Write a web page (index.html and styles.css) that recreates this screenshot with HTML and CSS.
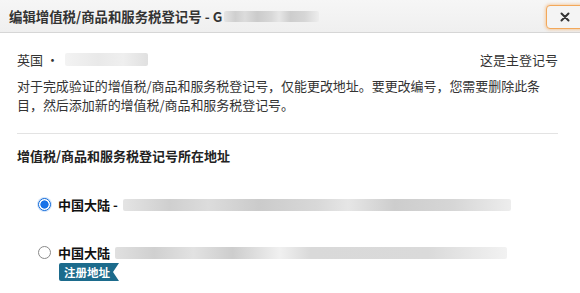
FILE: index.html
```html
<!DOCTYPE html>
<html lang="zh">
<head>
<meta charset="utf-8">
<link rel="stylesheet" href="styles.css">
</head>
<body>
<div class="modal">
  <div class="header">
    <div class="title">编辑增值税/商品和服务税登记号 - G<span class="blur blur-title"></span></div>
    <button class="close" aria-label="关闭">
      <svg width="10" height="10" viewBox="0 0 10 10"><path d="M1.5 1.5 L8.5 8.5 M8.5 1.5 L1.5 8.5" stroke="#333" stroke-width="2" stroke-linecap="round"/></svg>
    </button>
  </div>
  <div class="content">
    <div class="row-top">
      <div class="country">英国 · <span class="blur blur-num"></span></div>
      <div class="primary">这是主登记号</div>
    </div>
    <p class="note">对于完成验证的增值税/商品和服务税登记号，仅能更改地址。要更改编号，您需要删除此条目，然后添加新的增值税/商品和服务税登记号。</p>
    <div class="divider"></div>
    <div class="section-title">增值税/商品和服务税登记号所在地址</div>
    <div class="options">
      <label class="option">
        <span class="radio checked"></span>
        <span class="addr">中国大陆 -</span>
        <span class="blur blur-addr1"></span>
      </label>
      <div class="option-wrap">
        <label class="option">
          <span class="radio"></span>
          <span class="addr">中国大陆</span>
          <span class="blur blur-addr2"></span>
        </label>
        <div class="badge">注册地址</div>
      </div>
    </div>
  </div>
</div>
</body>
</html>
```

FILE: styles.css
```css
* { box-sizing: border-box; }
html, body {
  margin: 0;
  padding: 0;
  background: #fff;
  overflow: hidden;
}
body {
  font-family: "Noto Sans CJK SC", "Noto Sans", "Liberation Sans", sans-serif;
  color: #222;
  width: 580px;
  height: 293px;
}
.header {
  height: 33px;
  display: flex;
  align-items: center;
  justify-content: space-between;
  background: linear-gradient(#f6f6f6, #efefef);
  border-bottom: 1px solid #d6d6d6;
  padding-left: 9px;
}
.title {
  font-size: 13.4px;
  font-weight: 700;
  color: #333;
  display: flex;
  align-items: center;
  white-space: nowrap;
}
.blur {
  display: inline-block;
  background: linear-gradient(90deg, #e4e4e4 0%, #cfcfcf 12%, #dcdcdc 22%, #cbcbcb 35%, #d8d8d8 50%, #e6e6e6 58%, #cdcdcd 70%, #d6d6d6 85%, #ededed 100%);
  border-radius: 2px;
}
.blur-title {
  width: 95px;
  height: 11px;
  margin-left: 2px;
}
.close {
  width: 40px;
  height: 24px;
  margin-right: -6px;
  margin-top: 1px;
  border: 1.5px solid #f3a85a;
  border-radius: 4px;
  background: #f4f4f4;
  box-shadow: 0 0 3px 1px rgba(244, 158, 70, 0.45);
  display: flex;
  align-items: center;
  padding-left: 13px;
}
.content {
  padding: 13px 22px 0 17px;
  font-size: 13px;
}
.row-top {
  display: flex;
  justify-content: space-between;
  align-items: center;
  height: 26px;
}
.country {
  display: flex;
  align-items: center;
  color: #333;
}
.blur-num {
  width: 83px;
  height: 13px;
  margin-left: 6px;
  background: linear-gradient(90deg, #f3f3f3, #e9e9e9 40%, #efefef 70%, #e0e0e0);
}
.primary { color: #333; }
.note {
  margin: 4px 0 0 0;
  line-height: 19px;
  color: #333;
  letter-spacing: -0.05px;
}
.divider {
  height: 1px;
  background: #e3e3e3;
  margin-top: 19px;
}
.section-title {
  margin-top: 13px;
  font-weight: 700;
  color: #222;
  line-height: 18px;
}
.options {
  padding-left: 21px;
  margin-top: 30px;
  display: flex;
  flex-direction: column;
  gap: 29px;
}
.option {
  display: flex;
  align-items: center;
  height: 19px;
}
.radio {
  width: 13px;
  height: 13px;
  border-radius: 50%;
  border: 1px solid #8a8a8a;
  background: #fff;
  flex: none;
}
.radio.checked {
  border: 1px solid #0a66d8;
  background: radial-gradient(circle, #1a73e8 0 3.8px, #fff 4.4px);
  box-shadow: 0 0 0 1px rgba(26, 115, 232, 0.2);
}
.addr {
  font-weight: 700;
  margin-left: 7px;
  color: #111;
}
.blur-addr1 {
  width: 388px;
  height: 12px;
  margin-left: 5px;
}
.blur-addr2 {
  width: 392px;
  height: 12px;
  margin-left: 5px;
  background: linear-gradient(90deg, #e0e0e0 0%, #d0d0d0 10%, #e2e2e2 20%, #cdcdcd 30%, #f0f0f0 42%, #d9d9d9 50%, #dadada 80%, #f2f2f2 100%);
}
.badge {
  margin-left: 21px;
  margin-top: 1px;
  display: inline-block;
  height: 18px;
  line-height: 18px;
  padding: 0 9px 0 5px;
  background: #1c6b8c;
  color: #fff;
  font-size: 11.5px;
  font-weight: 700;
  clip-path: polygon(0 0, 100% 0, 90% 50%, 100% 100%, 0 100%);
  border-radius: 2px 0 0 2px;
}
```
